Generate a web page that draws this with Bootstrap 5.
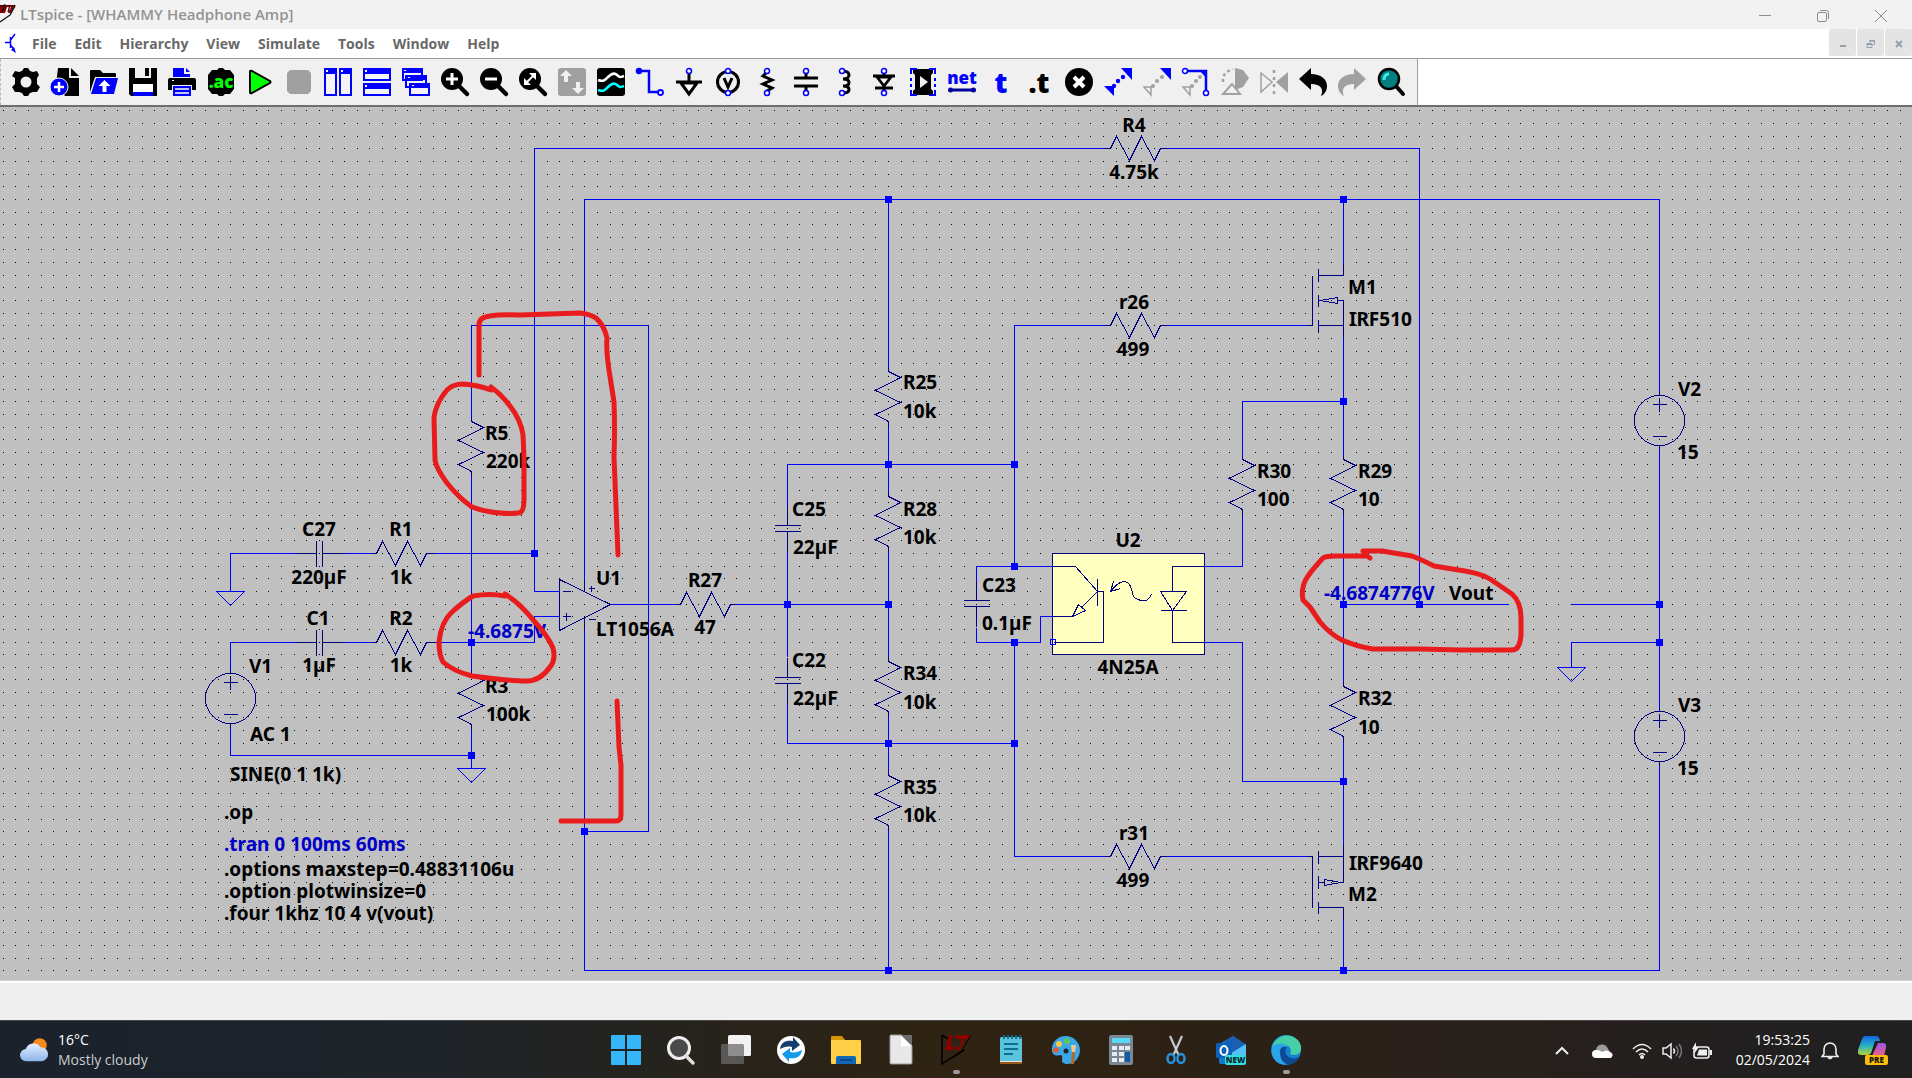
<!DOCTYPE html>
<html lang="en">
<head>
<meta charset="utf-8">
<meta name="viewport" content="width=device-width, initial-scale=1">
<title>LTspice - [WHAMMY Headphone Amp]</title>
<link href="https://cdn.jsdelivr.net/npm/bootstrap@5.3.0/dist/css/bootstrap.min.css" rel="stylesheet">
<style>
  body { font-family: "Open Sans", "Noto Sans", sans-serif; background: #efefef; }
  button { background: none; border: 0; padding: 0; }
  .title-bar { height: 29px; background: #f2f2f2; color: #929292; font-size: 15px; font-weight: 600; line-height: 29px; }
  .win-set { padding-right: 2px; }
  .win-btn { width: 58px; height: 29px; line-height: 24px; color: #8b8b8b; }
  .menu-bar { height: 30px; background: #fff; border-bottom: 1px solid #9a9a9a; padding-left: 5px; }
  .menu-list { gap: 18px; }
  .menu-bar a { color: #686868; font-size: 14px; font-weight: 700; line-height: 29px; text-decoration: none; }
  .mdi-set { gap: 1px; }
  .mdi-btn { width: 27px; height: 27px; background: #e4e4e4; border-radius: 2px; color: #94a0b0; }
  .tool-bar { height: 46px; background: #fff; }
  .tool-set { width: 1418px; background: #f0f0f0; border-right: 1px solid #a0a0a0; border-left: 1px dashed #bbb; padding-left: 5px; }
  .tool-btn { width: 39px; height: 46px; }
  .tool-btn svg { width: 28px; height: 28px; overflow: visible; }
  .sheet { background: #c0c0c0; border-top: 2px solid #6e6e6e; min-height: 0; }
  .sheet svg { display: block; width: 100%; height: 100%; }
  .wire { stroke: #0000ff; fill: none; }
  .sym { stroke: #000080; fill: none; }
  .node { fill: #0000ff; stroke: none; }
  .labels text { font: 700 19px "Noto Sans", "Open Sans", sans-serif; fill: #000; }
  .labels .calc { fill: #0000c8; }
  .labels .mid { text-anchor: middle; }
  .pen path { fill: none; stroke: #e81c1c; stroke-width: 5; stroke-linecap: round; stroke-linejoin: round; }
  .status-line { height: 39px; background: #efefef; border-top: 2px solid #fff; box-shadow: 0 -1px #d0d0d0; }
  .task-bar { height: 58px; border-top: 1px solid #4a4a48; color: #fff; font-size: 14px; line-height: 20px;
    background: linear-gradient(90deg, #1b222c 0, #1d2329 22%, #24231f 33%, #302313 50%, #2c2114 62%, #2a211c 75%, #221f1f 90%, #202020 100%); }
  .task-side { flex: 1 1 0; }
  .app-btn { width: 55px; height: 57px; position: relative; }
  .app-btn svg { width: 30px; height: 30px; overflow: visible; }
  .app-btn.is-open::after { content: ""; position: absolute; left: 24px; bottom: 4px; width: 7px; height: 4px; border-radius: 2px; background: #9b9b9b; }
  .soft { color: #c9ccd0; }
  .tray-btn { width: 30px; height: 57px; }
  .tray-wide { width: 40px; }
  .tray-cloud { width: 50px; }
  .tray-clock { width: 93px; }
</style>
<script src="https://cdn.jsdelivr.net/npm/bootstrap@5.3.0/dist/js/bootstrap.bundle.min.js"></script>
</head>
<body class="vh-100 d-flex flex-column overflow-hidden">

<header class="title-bar d-flex align-items-start flex-shrink-0">
  <svg width="16" height="26" viewBox="0 0 16 26" class="flex-shrink-0" aria-hidden="true"><path d="M0 5h15l-4 8H8l3-6H7l-2 6H0z" fill="#8b0000"/><path d="M0 6l5-1-3 7M10 5l-2 7M14 5l1 1-5 9-10 7" fill="none" stroke="#111" stroke-width="1.2"/></svg>
  <span class="ps-1">LTspice - [WHAMMY Headphone Amp]</span>
  <div class="win-set ms-auto d-flex">
    <button class="win-btn" aria-label="Minimize"><svg width="12" height="12" viewBox="0 0 12 12"><path d="M0 5.500h12" stroke="currentColor"/></svg></button>
    <button class="win-btn" aria-label="Restore"><svg width="12" height="12" viewBox="0 0 12 12" fill="none" stroke="currentColor"><rect x=".5" y="2.500" width="9" height="9" rx="1.500"/><path d="M3 .5h6.500q2 0 2 2V9"/></svg></button>
    <button class="win-btn" aria-label="Close"><svg width="12" height="12" viewBox="0 0 12 12"><path d="M0 0l12 12M12 0L0 12" stroke="currentColor"/></svg></button>
  </div>
</header>

<nav class="menu-bar d-flex align-items-start flex-shrink-0">
  <svg width="11" height="21" viewBox="0 0 11 21" class="mt-1" aria-hidden="true"><path d="M0 9.500h5M5.500 4v11M5.500 7L10 1M5.500 12l4 5" stroke="#00f" stroke-width="1.500" fill="none"/><path d="M11 20l-5-3 3-3z" fill="#00f"/></svg>
  <div class="menu-list d-flex ms-3">
    <a href="#">File</a><a href="#">Edit</a><a href="#">Hierarchy</a><a href="#">View</a><a href="#">Simulate</a><a href="#">Tools</a><a href="#">Window</a><a href="#">Help</a>
  </div>
  <div class="mdi-set ms-auto d-flex">
    <button class="mdi-btn" aria-label="Minimize sheet"><svg width="10" height="10" viewBox="0 0 10 10"><path d="M2 6h6v2H2z" fill="currentColor"/></svg></button>
    <button class="mdi-btn" aria-label="Restore sheet"><svg width="10" height="10" viewBox="0 0 10 10" fill="none" stroke="currentColor"><path d="M1 4.500h5v4H1zM1 5.500h5M3.500 3V1.500h5v4H7M3.500 2.200h5"/></svg></button>
    <button class="mdi-btn" aria-label="Close sheet"><svg width="10" height="10" viewBox="0 0 10 10"><path d="M2 2l6 6M8 2L2 8" stroke="currentColor" stroke-width="2"/></svg></button>
  </div>
</nav>

<div class="tool-bar d-flex flex-shrink-0">
 <div class="tool-set d-flex">
  <button class="tool-btn" aria-label="Settings"><svg viewBox="0 0 28 28"><path fill-rule="evenodd" d="M10 3l2-3h4l2 3 3 1 4-1 2 4-2 3v6l3 3-3 5-4 0-3 1-2 3h-4l-2-3-3-1H3l-3-5 3-3v-6L0 8l3-5 4 1zM14 8.500a5.500 5.500 0 1 0 0 11 5.500 5.500 0 0 0 0-11z"/></svg></button>
  <button class="tool-btn" aria-label="New schematic"><svg viewBox="0 0 28 28"><path d="M7 0h11v10h10v18H14L5 16zM20 0l8 8h-8z"/><circle cx="8" cy="19" r="9" fill="#00f" stroke="#f0f0f0"/><path d="M8 14v10M3 19h10" stroke="#fff" stroke-width="2.500"/></svg></button>
  <button class="tool-btn" aria-label="Open"><svg viewBox="0 0 28 28"><path d="M0 24V3q0-1 1-1h9l3 3h12q1 0 1 1v3H5z"/><path d="M6 10h22l-4 16H1z" fill="#00f"/><path d="M14.500 12l6 6h-4v6h-4v-6h-4z" fill="#fff"/></svg></button>
  <button class="tool-btn" aria-label="Save"><svg viewBox="0 0 28 28"><path d="M0 0h28v28H2l-2-2z"/><path d="M6 0h16v10H6z" fill="#f0f0f0"/><path d="M16 0h4v8h-4z"/><path d="M4 16h20v8H4z" fill="#fff"/><path d="M4 24h20v4H4z" fill="#00f"/></svg></button>
  <button class="tool-btn" aria-label="Print"><svg viewBox="0 0 28 28"><path d="M5 0h11v6h6v3H5zM18 0l4 4h-4z" fill="#00f"/><path d="M2 10h24q2 0 2 2v10h-4v-5H4v5H0V12q0-2 2-2z"/><path d="M4 12.500h2" stroke="#fff"/><path d="M5 18h18v10H5z" fill="#00f"/><path d="M7 21h14M7 25h14" stroke="#fff" stroke-width="1.500"/></svg></button>
  <button class="tool-btn" aria-label="Configure analysis"><svg viewBox="0 0 28 28"><path d="M10 2l2-2h4l2 2 5 0 4 5v14l-4 5h-5l-2 2h-4l-2-2H5l-4-5V7l4-5z"/><text x="14" y="20" text-anchor="middle" font-family="Open Sans" font-weight="800" font-size="17" fill="#0f0">.ac</text></svg></button>
  <button class="tool-btn" aria-label="Run"><svg viewBox="0 0 28 28"><path d="M4 4v20q0 2 2 1l18-10q1-1 0-2L6 3Q4 2 4 4z" fill="#0f0" stroke="#000" stroke-width="2" stroke-linejoin="round"/></svg></button>
  <button class="tool-btn" aria-label="Stop"><svg viewBox="0 0 28 28"><path d="M5 2h18l3 3v18l-3 3H5l-3-3V5z" fill="#a0a0a0"/></svg></button>
  <button class="tool-btn" aria-label="Tile vertically"><svg viewBox="0 0 28 28"><path d="M0 0h13v28H0zM15 0h13v28H15z" fill="#00f"/><path d="M2 6h9v20H2zM17 6h9v20h-9zM2 2h2v2H2zM17 2h2v2h-2z" fill="#f4f4f4"/></svg></button>
  <button class="tool-btn" aria-label="Tile horizontally"><svg viewBox="0 0 28 28"><path d="M0 0h28v13H0zM0 15h28v13H0z" fill="#00f"/><path d="M2 6h24v5H2zM2 21h24v5H2zM2 2h2v2H2zM2 17h2v2H2z" fill="#f4f4f4"/></svg></button>
  <button class="tool-btn" aria-label="Cascade"><svg viewBox="0 0 28 28"><g fill="#f4f4f4" stroke="#00f" stroke-width="2"><path d="M1 1h19v11H1zM4 8h20v11H4zM8 16h19v11H8z"/></g><path d="M1 1h19v4H1zM4 8h20v4H4zM8 16h19v4H8z" fill="#00f"/><path d="M2 2h2v1H2zM6 9h2v1H6zM10 17h2v1h-2z" fill="#fff"/></svg></button>
  <button class="tool-btn" aria-label="Zoom in"><svg viewBox="0 0 28 28"><circle cx="11" cy="11" r="11"/><path d="M18 18l8 8" stroke="#000" stroke-width="4.500" stroke-linecap="round"/><path d="M11 5v12M5 11h12" stroke="#fff" stroke-width="3"/></svg></button>
  <button class="tool-btn" aria-label="Zoom out"><svg viewBox="0 0 28 28"><circle cx="11" cy="11" r="11"/><path d="M18 18l8 8" stroke="#000" stroke-width="4.500" stroke-linecap="round"/><path d="M5 11h12" stroke="#fff" stroke-width="3"/></svg></button>
  <button class="tool-btn" aria-label="Zoom to fit"><svg viewBox="0 0 28 28"><circle cx="11" cy="11" r="11"/><path d="M18 18l8 8" stroke="#000" stroke-width="4.500" stroke-linecap="round"/><path d="M7 15l8-8" stroke="#fff" stroke-width="2"/><path d="M10 5h7v7zM5 10v7h7z" fill="#fff"/></svg></button>
  <button class="tool-btn" aria-label="Autorange"><svg viewBox="0 0 28 28"><rect width="28" height="28" rx="3" fill="#a0a0a0"/><path d="M8 2l6 6h-4v6H6V8H2zM20 26l-6-6h4v-6h4v6h4z" fill="#f0f0f0"/></svg></button>
  <button class="tool-btn" aria-label="Waveforms"><svg viewBox="0 0 28 28"><rect width="28" height="28" rx="3"/><path d="M1 12c6 2 7 0 10-3s6-5 9-2 4 2 7 1" fill="none" stroke="#fff" stroke-width="2.500"/><path d="M1 22c6 2 7 0 10-3s6-5 9-2 4 2 7 1" fill="none" stroke="#0ff" stroke-width="2.500"/></svg></button>
  <button class="tool-btn" aria-label="Wire"><svg viewBox="0 0 28 28" fill="none" stroke="#00f" stroke-width="2.500"><circle cx="3" cy="3" r="2" fill="#00f"/><path d="M3 3h10v21h10"/><circle cx="24.500" cy="24.500" r="2.500" fill="#fff" stroke-width="1.800"/></svg></button>
  <button class="tool-btn" aria-label="Ground"><svg viewBox="0 0 28 28"><path d="M14 4v11M1 14h26M6 15l8 11 8-11z" fill="#fff" stroke="#000" stroke-width="3"/><circle cx="14" cy="3" r="2.500" fill="#fff" stroke="#00f" stroke-width="1.500"/></svg></button>
  <button class="tool-btn" aria-label="Voltage source"><svg viewBox="0 0 28 28"><circle cx="14" cy="14" r="10.500" fill="none" stroke="#000" stroke-width="3"/><path d="M10 10l4 9 4-9" fill="none" stroke="#000" stroke-width="3"/><g fill="#fff" stroke="#00f" stroke-width="1.500"><circle cx="14" cy="3" r="2.500"/><circle cx="14" cy="25" r="2.500"/></g></svg></button>
  <button class="tool-btn" aria-label="Resistor"><svg viewBox="0 0 28 28"><path d="M14 4l-4 4 9 4-9 4 9 4-5 3" fill="none" stroke="#000" stroke-width="3"/><g fill="#fff" stroke="#00f" stroke-width="1.500"><circle cx="14" cy="3" r="2.500"/><circle cx="14" cy="25" r="2.500"/></g></svg></button>
  <button class="tool-btn" aria-label="Capacitor"><svg viewBox="0 0 28 28"><path d="M14 4v6M14 18v6M2 10h24M2 18h24" fill="none" stroke="#000" stroke-width="3"/><g fill="#fff" stroke="#00f" stroke-width="1.500"><circle cx="14" cy="3" r="2.500"/><circle cx="14" cy="25" r="2.500"/></g></svg></button>
  <button class="tool-btn" aria-label="Inductor"><svg viewBox="0 0 28 28"><path d="M12 3c8 0 8 8 0 8 8 0 8 7 0 7 8 0 8 7 0 7" fill="none" stroke="#000" stroke-width="3"/><g fill="#fff" stroke="#00f" stroke-width="1.500"><circle cx="11" cy="3" r="2.500"/><circle cx="11" cy="25" r="2.500"/></g></svg></button>
  <button class="tool-btn" aria-label="Diode"><svg viewBox="0 0 28 28"><path d="M14 4v4M14 20v4M3 8h22M7 9l7 9 7-9zM5 20h18" fill="#f0f0f0" stroke="#000" stroke-width="2.800"/><g fill="#fff" stroke="#00f" stroke-width="1.500"><circle cx="14" cy="3" r="2.500"/><circle cx="14" cy="25" r="2.500"/></g></svg></button>
  <button class="tool-btn" aria-label="Component"><svg viewBox="0 0 28 28"><path d="M4 1h20v4l-2 2v14l2 2v4H4v-4l2-2V7L4 5z"/><path d="M2 6V1h6M20 1h6v5M26 22v5h-6M8 27H2v-5M2 10v3M2 16v3M26 10v3M26 16v3" fill="none" stroke="#00f" stroke-width="2"/><path d="M11 8l8 6-8 6z" fill="#f0f0f0"/></svg></button>
  <button class="tool-btn" aria-label="Label net"><svg viewBox="0 0 28 28"><text x="14" y="16" text-anchor="middle" font-family="Open Sans" font-weight="800" font-size="17" fill="#00f">net</text><path d="M3 22h22" stroke="#00009c" stroke-width="3"/><circle cx="2.500" cy="22" r="2.500" fill="#00009c"/><circle cx="25.500" cy="22" r="2.500" fill="#00009c"/></svg></button>
  <button class="tool-btn" aria-label="Text"><svg viewBox="0 0 28 28"><text x="14" y="25" text-anchor="middle" font-family="Open Sans" font-weight="800" font-size="28" fill="#00f">t</text></svg></button>
  <button class="tool-btn" aria-label="SPICE directive"><svg viewBox="0 0 28 28"><text x="13" y="25" text-anchor="middle" font-family="Open Sans" font-weight="800" font-size="28">.t</text></svg></button>
  <button class="tool-btn" aria-label="Delete"><svg viewBox="0 0 28 28"><circle cx="14" cy="14" r="14"/><path d="M9 9l10 10M19 9L9 19" stroke="#fff" stroke-width="4"/></svg></button>
  <button class="tool-btn" aria-label="Duplicate"><svg viewBox="0 0 28 28" fill="#00f"><path d="M17 0h11v12zM0 18h10v10z"/><circle cx="10" cy="18" r="2.200"/><circle cx="14" cy="13" r="2.200"/><circle cx="19" cy="9" r="2.200"/></svg></button>
  <button class="tool-btn" aria-label="Move"><svg viewBox="0 0 28 28"><path d="M17 0h11v12z" fill="#00f"/><path d="M1 19h7v8z" fill="none" stroke="#a0a0a0" stroke-width="1.500"/><g fill="#a0a0a0"><circle cx="10" cy="18" r="2"/><circle cx="14" cy="13" r="2"/><circle cx="19" cy="9" r="2"/></g></svg></button>
  <button class="tool-btn" aria-label="Drag"><svg viewBox="0 0 28 28"><path d="M1 19h7v8z" fill="none" stroke="#a0a0a0" stroke-width="1.500"/><g fill="#a0a0a0"><circle cx="10" cy="18" r="2"/><circle cx="14" cy="13" r="2"/><circle cx="18" cy="9" r="2"/></g><path d="M5 3h19v20" fill="none" stroke="#00f" stroke-width="2.500"/><path d="M18 3h7v8z" fill="#00f"/><g fill="#fff" stroke="#00f" stroke-width="1.500"><circle cx="3" cy="3" r="2.500"/><circle cx="24" cy="25" r="2.500"/></g></svg></button>
  <button class="tool-btn" aria-label="Rotate"><svg viewBox="0 0 28 28"><path d="M14 0l8 2 6 8-6 9-8 3z" fill="#a0a0a0"/><path d="M11 16l8 10H2z" fill="#f0f0f0" stroke="#a0a0a0" stroke-width="2"/><path d="M2 14V9l3-5 7-3" fill="none" stroke="#a0a0a0" stroke-width="2.500" stroke-dasharray="3 3"/></svg></button>
  <button class="tool-btn" aria-label="Mirror"><svg viewBox="0 0 28 28"><path d="M28 4L16 14l12 11z" fill="#a0a0a0"/><path d="M1 5l11 9L1 24z" fill="none" stroke="#a0a0a0" stroke-width="1.500"/><path d="M14 2v24" stroke="#a0a0a0" stroke-width="2.500" stroke-dasharray="3 4"/></svg></button>
  <button class="tool-btn" aria-label="Undo"><svg viewBox="0 0 28 28"><path d="M0 11L12 0v6c10 0 16 5 16 12 0 4-2 8-6 10 3-7 0-12-10-12v6z"/></svg></button>
  <button class="tool-btn" aria-label="Redo"><svg viewBox="0 0 28 28"><path d="M28 11L16 0v6C6 6 0 11 0 18c0 4 2 8 6 10-3-7 0-12 10-12v6z" fill="#a0a0a0"/></svg></button>
  <button class="tool-btn" aria-label="Find"><svg viewBox="0 0 28 28"><path d="M18 17l8 9" stroke="#000" stroke-width="4" stroke-linecap="round"/><circle cx="12" cy="11" r="10" fill="#008080" stroke="#000" stroke-width="2.500"/><path d="M7 12q0-6 5-6" fill="none" stroke="#3fe8e0" stroke-width="3"/></svg></button>
 </div>
</div>

<main class="sheet flex-fill">
<svg viewBox="0 107 1912 874" preserveAspectRatio="xMinYMin meet" shape-rendering="crispEdges" role="img" aria-label="Schematic">
  <defs>
    <path id="rv" d="M0-5V0L12 6L-13 19L12 31L-13 43L0 50V55"/>
    <path id="rh" d="M-6 0H0L6-12L19 12L31-12L44 12L50 0H56"/>
    <path id="cv" d="M0-20V0M-13 0H13M-13 6H13M0 6V26"/>
    <path id="ch" d="M-21 0H0M0-13V13M6-13V13M6 0H28"/>
    <g id="vs"><circle r="25"/><path d="M0-29V-25M0 25V29M-7-16H7M0-23V-9M-7 16H7"/></g>
    <path id="gnd" d="M-14 0H14L0 14Z"/>
    <rect id="nd" x="-3.500" y="-3.500" width="7" height="7"/>
  </defs>
  <path id="dots" stroke="#000"/>
  <g transform="translate(.5 .5)">
    <rect x="1052" y="553" width="152" height="101" fill="#ffffc0" stroke="#000080"/>
    <g class="wire">
      <path d="M1104 148H534V591H559M1166 148H1419V604"/>
      <path d="M584 591V199H1659V395M584 617V970H1659V761M1659 444V711"/>
      <path d="M471 416V325H648V831H584M471 476V669M471 729V768"/>
      <path d="M559 616H534V642H433M344 642H372M295 642H230V673M230 724V755H471"/>
      <path d="M295 553H230V591M344 553H372M433 553H534M610 604H675M736 604H888"/>
      <path d="M888 199V366M888 426V491M888 551V656M888 716V770M888 830V970"/>
      <path d="M787 505V464H1014M787 551V656M787 703V743H1014"/>
      <path d="M1104 325H1014V566M1014 642V856H1104M976 580V566H1052M976 627V642H1040V616H1052"/>
      <path d="M1166 325H1306M1166 856H1306M1343 199V263M1343 337V454M1343 514V681M1343 741V844M1343 919V970"/>
      <path d="M1204 566H1242V514M1242 454V401H1343M1204 642H1242V781H1343M1343 604H1508M1571 604H1659M1659 642H1571V667"/>
      <use href="#gnd" x="230" y="591"/><use href="#gnd" x="471" y="768"/><use href="#gnd" x="1571" y="667"/>
      <rect x="1050" y="639" width="5" height="5"/>
    </g>
    <g class="sym">
      <use href="#rv" x="471" y="421"/><use href="#rv" x="471" y="674"/><use href="#rv" x="888" y="371"/><use href="#rv" x="888" y="496"/><use href="#rv" x="888" y="661"/><use href="#rv" x="888" y="775"/><use href="#rv" x="1242" y="459"/><use href="#rv" x="1343" y="459"/><use href="#rv" x="1343" y="686"/>
      <use href="#rh" x="376" y="553"/><use href="#rh" x="376" y="642"/><use href="#rh" x="680" y="604"/><use href="#rh" x="1110" y="148"/><use href="#rh" x="1110" y="325"/><use href="#rh" x="1110" y="856"/>
      <use href="#cv" x="787" y="525"/><use href="#cv" x="787" y="677"/><use href="#cv" x="976" y="600"/>
      <use href="#ch" x="316" y="553"/><use href="#ch" x="316" y="642"/>
      <use href="#vs" x="230" y="698"/><use href="#vs" x="1659" y="420"/><use href="#vs" x="1659" y="736"/>
      <path d="M559 579V630L610 604ZM562 591H570M562 616H570M566 612V620M588 588H594M591 585V591M588 619H595M584 580V591M584 617V629"/>
      <path d="M1052 566H1075L1097 591M1097 578V605M1097 591H1103V642H1053M1097 591L1081 607M1052 616H1072M1072 616L1078 604L1085 610Z"/>
      <path d="M1120 588L1110 591L1113 581M1110 591C1116 584 1119 581 1124 581C1130 582 1131 588 1132 593C1133 599 1138 600 1144 600C1148 600 1150 596 1151 594"/>
      <path d="M1204 566H1172V591M1160 591H1186L1172 610ZM1160 610H1186M1172 610V642H1204"/>
      <path d="M1343 263V275H1318M1318 268V281M1318 294V306M1318 319V332M1306 325H1312V275M1318 325H1343M1343 337V300H1337M1318 300H1322M1320 300L1337 297V303Z"/>
      <path d="M1343 844V882H1340M1318 856H1343M1318 850V863M1318 875V888M1318 901V913M1306 856H1312V907M1318 907H1343V919M1318 882H1324M1340 882L1324 879V885Z"/>
    </g>
  </g>
  <g class="node" transform="translate(.5 .5)">
    <use href="#nd" x="534" y="553"/><use href="#nd" x="471" y="642"/><use href="#nd" x="471" y="755"/><use href="#nd" x="584" y="831"/><use href="#nd" x="888" y="199"/><use href="#nd" x="1343" y="199"/><use href="#nd" x="888" y="464"/><use href="#nd" x="1014" y="464"/><use href="#nd" x="787" y="604"/><use href="#nd" x="888" y="604"/><use href="#nd" x="888" y="743"/><use href="#nd" x="1014" y="743"/><use href="#nd" x="888" y="970"/><use href="#nd" x="1014" y="566"/><use href="#nd" x="1014" y="642"/><use href="#nd" x="1343" y="401"/><use href="#nd" x="1343" y="604"/><use href="#nd" x="1419" y="604"/><use href="#nd" x="1343" y="781"/><use href="#nd" x="1343" y="970"/><use href="#nd" x="1659" y="604"/><use href="#nd" x="1659" y="642"/>
  </g>
  <g class="labels">
    <text class="mid" x="319" y="536">C27</text><text class="mid" x="319" y="584">220µF</text>
    <text class="mid" x="401" y="536">R1</text><text class="mid" x="401" y="584">1k</text>
    <text class="mid" x="318" y="625">C1</text><text class="mid" x="319" y="672">1µF</text>
    <text class="mid" x="401" y="625">R2</text><text class="mid" x="401" y="672">1k</text>
    <text x="249" y="673">V1</text><text x="250" y="741">AC 1</text><text x="230" y="781">SINE(0 1 1k)</text>
    <text x="224" y="819">.op</text><text class="calc" x="224" y="851">.tran 0 100ms 60ms</text>
    <text x="224" y="876">.options maxstep=0.48831106u</text><text x="224" y="898">.option plotwinsize=0</text><text x="224" y="920">.four 1khz 10 4 v(vout)</text>
    <text x="485" y="440">R5</text><text x="486" y="468">220k</text><text x="485" y="693">R3</text><text x="486" y="721">100k</text>
    <text class="calc" x="468" y="638">-4.6875V</text>
    <text x="596" y="585">U1</text><text x="596" y="636">LT1056A</text>
    <text class="mid" x="705" y="587">R27</text><text class="mid" x="705" y="634">47</text>
    <text x="903" y="389">R25</text><text x="903" y="418">10k</text><text x="903" y="516">R28</text><text x="903" y="544">10k</text>
    <text x="903" y="680">R34</text><text x="903" y="709">10k</text><text x="903" y="794">R35</text><text x="903" y="822">10k</text>
    <text x="792" y="516">C25</text><text x="793" y="554">22µF</text><text x="792" y="667">C22</text><text x="793" y="705">22µF</text>
    <text x="982" y="592">C23</text><text x="982" y="630">0.1µF</text>
    <text class="mid" x="1128" y="547">U2</text><text class="mid" x="1128" y="674">4N25A</text>
    <text class="mid" x="1134" y="132">R4</text><text class="mid" x="1134" y="179">4.75k</text>
    <text class="mid" x="1134" y="309">r26</text><text class="mid" x="1133" y="356">499</text>
    <text class="mid" x="1134" y="840">r31</text><text class="mid" x="1133" y="887">499</text>
    <text x="1348" y="294">M1</text><text x="1349" y="326">IRF510</text><text x="1349" y="870">IRF9640</text><text x="1348" y="901">M2</text>
    <text x="1257" y="478">R30</text><text x="1257" y="506">100</text><text x="1358" y="478">R29</text><text x="1358" y="506">10</text><text x="1358" y="705">R32</text><text x="1358" y="734">10</text>
    <text x="1678" y="396">V2</text><text x="1677" y="459">15</text><text x="1678" y="712">V3</text><text x="1677" y="775">15</text>
    <text class="calc" x="1324" y="600">-4.6874776V</text><text x="1449" y="600">Vout</text>
  </g>
  <g class="pen" shape-rendering="auto">
    <path d="M479 375V325Q479 317 490 316Q500 314 520 315L580 313Q590 314 596 318Q604 325 607 338Q606 350 609 370L614 402Q615 430 614 457L618 555"/>
    <path d="M491 387Q502 395 510 406Q521 420 523 435L524 457V500Q524 513 518 513Q510 514 500 513Q485 512 472 507Q459 498 447 483Q436 468 435 460L434 417Q436 403 447 390Q453 384 463 384Q478 385 491 390"/>
    <path d="M505 594Q520 603 534 621Q548 636 553 648Q556 660 550 667Q540 681 527 681Q510 681 472 676Q453 671 443 662Q439 655 439 642Q441 622 452 612Q463 602 473 596Q490 593 505 596"/>
    <path d="M617 701L619 747L621 765V815Q621 821 616 821H561"/>
    <path d="M1363 551H1382L1412 556Q1420 559 1434 566L1465 571Q1482 574 1490 579L1512 594Q1521 602 1521 618V635Q1520 650 1512 650H1460L1419 649H1373Q1355 646 1342 640Q1330 634 1320 622L1310 607L1303 600Q1301 590 1305 581Q1309 573 1323 558Q1326 556 1335 556H1367L1370 558"/>
  </g>
</svg>
</main>

<footer class="status-line flex-shrink-0"></footer>

<div class="task-bar d-flex flex-shrink-0 align-items-center">
  <div class="task-side">
   <button class="d-flex align-items-center text-start text-white ms-3 ps-1">
    <svg width="30" height="26" viewBox="0 0 32 26" class="me-2"><defs><linearGradient id="cl" x2="0" y2="1"><stop stop-color="#e2efff"/><stop offset="1" stop-color="#8fb4ea"/></linearGradient></defs><circle cx="21" cy="8" r="7.500" fill="#f58a1f"/><path d="M7 25a6.500 6.500 0 0 1-1-13 9 9 0 0 1 16-2 7.600 7.600 0 0 1 2 15z" fill="url(#cl)"/></svg>
    <span><span class="d-block">16°C</span><span class="d-block soft">Mostly cloudy</span></span>
   </button>
  </div>
  <div class="d-flex">
    <button class="app-btn" aria-label="Start"><svg viewBox="0 0 30 30" fill="#35b6f8"><path d="M0 1q0-1 1-1h13v14H0zM16 0h13q1 0 1 1v13H16zM0 16h14v14H1q-1 0-1-1zM16 16h14v13q0 1-1 1H16z"/></svg></button>
    <button class="app-btn" aria-label="Search"><svg viewBox="0 0 30 30"><circle cx="13" cy="13" r="10.500" fill="#4a4a4a" stroke="#eee" stroke-width="3"/><path d="M20 21l7 7" stroke="#ddd" stroke-width="3.500" stroke-linecap="round"/></svg></button>
    <button class="app-btn" aria-label="Task view"><svg viewBox="0 0 30 30"><rect x="7" width="23" height="21" rx="1.500" fill="#f2f2f2"/><rect y="9" width="23" height="20" rx="1.500" fill="#6b6b6b" opacity=".75"/></svg></button>
    <button class="app-btn" aria-label="Sync"><svg viewBox="0 0 30 30"><circle cx="15" cy="15" r="14" fill="#fff"/><path d="M4 14C5 7 10 5 17 6V2l7 8-8 6v-4c-5-1-8 0-12 2z" fill="#123f6d"/><path d="M26 15c-1 7-6 9-13 8v4l-7-8 8-6v4c5 1 8 0 12-2z" fill="#119be8"/></svg></button>
    <button class="app-btn" aria-label="File Explorer"><svg viewBox="0 0 30 30"><path d="M0 2q0-1 1-1h10l3 4H0z" fill="#d59500"/><path d="M0 5h29q1 0 1 1v22q0 1-1 1H1q-1 0-1-1z" fill="#ffcf48"/><path d="M5 29v-6q0-2 2-2h16q2 0 2 2v6z" fill="#0f68b8"/><path d="M9 25h12" stroke="#0b4a86" stroke-width="2"/></svg></button>
    <button class="app-btn" aria-label="LibreOffice"><svg viewBox="0 0 30 30"><path d="M4 1q0-1 1-1h11l10 11v17q0 1-1 1H5q-1 0-1-1z" fill="#e8e8e8" stroke="#999"/><path d="M15 0l11 11V0z" fill="#6c6c6c"/><path d="M15 1v10h11z" fill="#fff"/></svg></button>
    <button class="app-btn is-open" aria-label="LTspice"><svg viewBox="0 0 30 30"><path d="M1 0v29l22-14M1 0l8 5" fill="none" stroke="#000" stroke-width="1.500"/><path d="M8 0h4L9 11h5l-2 4H4zM15 0h15l-3 4h-3l-5 11h-5l2-3h2l3-8h-6z" fill="#8b0000"/><path d="M30 0L20 17l-8 6" fill="none" stroke="#000"/></svg></button>
    <button class="app-btn" aria-label="Notepad"><svg viewBox="0 0 30 30"><rect x="4" y="2" width="22" height="27" rx="1.500" fill="#5cc3dc"/><path d="M4 26h22v3H4z" fill="#e6e2d8"/><path d="M8 0v4M12 0v4M16 0v4M20 0v4M24 0v4" stroke="#0c6f8f" stroke-width="1.800"/><path d="M8 9h14M8 14h14M8 19h9" stroke="#0b6f93" stroke-width="2"/><path d="M4 28h22" stroke="#9a5a1c" stroke-width="2"/></svg></button>
    <button class="app-btn" aria-label="Paint"><svg viewBox="0 0 30 30"><path d="M15 1C5 1 0 9 1 16c1 5 5 5 8 4 3 0 2 3 2 6 0 2 3 3 5 3 8 0 13-7 13-14S23 1 15 1z" fill="#3aa7e8"/><circle cx="8" cy="9" r="3" fill="#f6c945"/><circle cx="16" cy="6" r="3" fill="#5dc858"/><circle cx="5" cy="15" r="2.800" fill="#e25a32"/><circle cx="15" cy="16" r="2.500" fill="#1b2530"/><path d="M20 10h5l-1 8h-3z" fill="#f1c78b"/><path d="M22.500 17l-1 12" stroke="#b36a24" stroke-width="3"/></svg></button>
    <button class="app-btn" aria-label="Calculator"><svg viewBox="0 0 30 30"><rect x="3" width="24" height="30" rx="2" fill="#7b8794"/><path d="M6 3h18v5H6z" fill="#59d7f5"/><path d="M6 11h5v4H6zM13 11h5v4h-5zM19 11h5v4h-5zM6 17h5v4H6zM13 17h5v4h-5zM6 23h5v4H6zM13 23h5v4h-5z" fill="#e7ebef"/><path d="M19 17h5v10h-5z" fill="#0c5ca8"/></svg></button>
    <button class="app-btn" aria-label="Snipping Tool"><svg viewBox="0 0 30 30"><path d="M9 1l9 20M21 1l-9 20" stroke="#c3cad1" stroke-width="2.200"/><g fill="none" stroke="#2492dd" stroke-width="2.500"><ellipse cx="10" cy="23.500" rx="3.500" ry="4.500"/><ellipse cx="20" cy="23.500" rx="3.500" ry="4.500"/></g></svg></button>
    <button class="app-btn" aria-label="Outlook (new)"><svg viewBox="0 0 30 30"><path d="M3 9L17 1l12 8v18q0 2-2 2H5q-2 0-2-2z" fill="#1479d0"/><path d="M17 1l12 8-12 8-12-8z" fill="#1b5fb5"/><path d="M12 20L30 9v12H12z" fill="#54c0f5"/><rect y="8" width="16" height="15" rx="1.500" fill="#0b62b8"/><ellipse cx="8" cy="15.500" rx="3.500" ry="4.500" fill="none" stroke="#fff" stroke-width="2"/><rect x="9" y="20" width="21" height="10" rx="2" fill="#33dfe0"/><text x="19.500" y="28" text-anchor="middle" font-family="Open Sans" font-weight="800" font-size="8" fill="#052a33">NEW</text></svg></button>
    <button class="app-btn is-open" aria-label="Edge"><svg viewBox="0 0 30 30"><circle cx="15" cy="15" r="15" fill="#167fd1"/><path d="M1 12C4 3 12-1 20 1c7 2 11 8 10 14-1 5-6 6-11 4 2-4 0-9-6-9-5 0-9 0-12 2z" fill="#45cfa6"/><path d="M9 17c0-4 3-7 7-5-3 3-2 9 4 11 3 1 6 0 8-1-2 5-7 8-12 7-5-2-7-7-7-12z" fill="#0c4a94"/><path d="M1 12c4-4 12-5 16 0-6-2-9 2-8 7 0 4 2 8 6 11C5 30-1 21 1 12z" fill="#2aa5ea"/></svg></button>
  </div>
  <div class="task-side d-flex justify-content-end align-items-center">
    <button class="tray-btn" aria-label="Show hidden icons"><svg width="14" height="9" viewBox="0 0 14 9"><path d="M1 8l6-6 6 6" fill="none" stroke="#eee" stroke-width="2"/></svg></button>
    <button class="tray-btn tray-cloud" aria-label="OneDrive"><svg width="21" height="14" viewBox="0 0 21 14"><path d="M5 10a5.500 5.500 0 0 1 10-7l3 5z" fill="#9b9b9b"/><path d="M4 14a4 4 0 0 1 0-8q4 0 6 2 5-3 8 0a3 3 0 0 1-1 6z" fill="#fff"/></svg></button>
    <button class="tray-btn" aria-label="Wi-Fi"><svg width="20" height="16" viewBox="0 0 20 16" fill="none" stroke="#eee" stroke-width="1.600"><path d="M1 6q9-9 18 0M4 9q6-6 12 0M7 12q3-3 6 0"/><circle cx="10" cy="14" r="1.200" fill="#eee"/></svg></button>
    <button class="tray-btn" aria-label="Volume"><svg width="20" height="18" viewBox="0 0 20 18" fill="none" stroke="#eee" stroke-width="1.500"><path d="M1 6h3l5-4v14l-5-4H1zM11.500 6.500q2 2.500 0 5"/><path d="M14 4q4 5 0 10M17 2q5 7 0 14" stroke="#777"/></svg></button>
    <button class="tray-btn" aria-label="Battery"><svg width="20" height="16" viewBox="0 0 20 16"><rect x="2" y="4" width="15" height="11" rx="2.500" fill="none" stroke="#eee" stroke-width="1.600"/><path d="M7 6.500h8v6H5zM18 7h2v5h-2z" fill="#eee"/><path d="M4-1L0 6h3l-1 5 5-7H4z" fill="#eee"/></svg></button>
    <button class="tray-clock text-white text-end"><span class="d-block">19:53:25</span><span class="d-block">02/05/2024</span></button>
    <button class="tray-btn tray-wide" aria-label="Notifications"><svg width="18" height="19" viewBox="0 0 18 19" fill="none" stroke="#eee" stroke-width="1.600"><path d="M3 13V8a6 6 0 0 1 12 0v5l2 2.500H1zM7 16q2 3 4 0"/></svg></button>
    <button class="me-4 ms-2" aria-label="Copilot preview"><svg width="30" height="30" viewBox="0 0 30 30"><defs><linearGradient id="c1" x2="0" y2="1"><stop stop-color="#1466e0"/><stop offset=".5" stop-color="#23b0c8"/><stop offset="1" stop-color="#b8d433"/></linearGradient><linearGradient id="c2" x2="0" y2="1"><stop stop-color="#9a55ea"/><stop offset="1" stop-color="#f0607e"/></linearGradient></defs><path d="M7 1h11q3 0 4 5h-5l-4 12q-1 2-4 2H3q-4 0-3-5L4 4q1-3 3-3z" fill="url(#c1)"/><path d="M20 8h5q4 0 3 5l-2 8H14z" fill="url(#c2)"/><rect x="7" y="20" width="23" height="10" rx="2" fill="#fdbc0b"/><text x="18.500" y="28" text-anchor="middle" font-family="Open Sans" font-weight="800" font-size="8" fill="#201800">PRE</text></svg></button>
  </div>
</div>

<script>
  // Snap grid of the schematic sheet: one black pixel per grid point.
  const pitch = 12.646, originX = 230.35, originY = 198.9;
  let d = "";
  for (let r = -7; r <= 61; r++) {
    for (let c = -18; c <= 132; c++) {
      d += `M${Math.round(originX + c * pitch)} ${Math.round(originY + r * pitch)}.5h1`;
    }
  }
  document.getElementById("dots").setAttribute("d", d);
</script>
</body>
</html>
